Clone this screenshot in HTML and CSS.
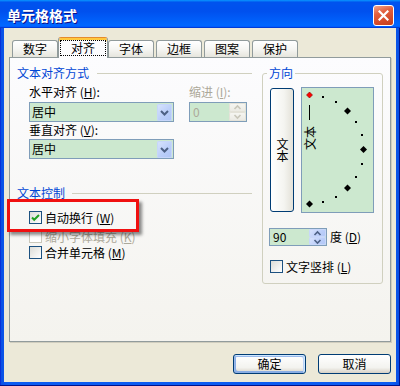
FILE: index.html
```html
<!DOCTYPE html>
<html>
<head>
  <meta charset="UTF-8">
  <title>单元格格式</title>
  <link rel="stylesheet" href="styles.css">
</head>
<body>
  <div class="window">
    <div class="titlebar">
      <span class="title">单元格格式</span>
      <button class="close-btn">
        <svg width="11" height="11" viewBox="0 0 11 11"><path d="M1.5 1.5L9.5 9.5M9.5 1.5L1.5 9.5" stroke="#fff" stroke-width="2.2" stroke-linecap="square"/></svg>
      </button>
    </div>

    <div class="client">
      <div class="tabs">
        <div class="tab">数字</div>
        <div class="tab active"><span class="focus">对齐</span></div>
        <div class="tab">字体</div>
        <div class="tab">边框</div>
        <div class="tab">图案</div>
        <div class="tab">保护</div>
      </div>

      <div class="panel">
        <div class="align-col">
          <div class="group-head">
            <span class="group-label">文本对齐方式</span>
            <span class="group-line"></span>
          </div>

          <div class="field-row">
            <div class="field">
              <div class="field-label">水平对齐 (<u>H</u>):</div>
              <div class="combo">
                <span class="combo-text">居中</span>
                <span class="drop-btn"><svg width="15" height="17" viewBox="0 0 15 17"><path d="M4 7l3.5 3.5L11 7" fill="none" stroke="#4D6185" stroke-width="2"/></svg></span>
              </div>
            </div>
            <div class="field disabled">
              <div class="field-label">缩进 (<u>I</u>):</div>
              <div class="spin indent">
                <span class="spin-text">0</span>
                <span class="spin-btns">
                  <span class="spin-up"><svg width="15" height="7" viewBox="0 0 15 7"><path d="M4.5 5l3-3 3 3" fill="none" stroke="#C9C7BA" stroke-width="1.6"/></svg></span>
                  <span class="spin-down"><svg width="15" height="7" viewBox="0 0 15 7"><path d="M4.5 2l3 3 3-3" fill="none" stroke="#C9C7BA" stroke-width="1.6"/></svg></span>
                </span>
              </div>
            </div>
          </div>

          <div class="field field-v">
            <div class="field-label">垂直对齐 (<u>V</u>):</div>
            <div class="combo">
              <span class="combo-text">居中</span>
              <span class="drop-btn"><svg width="15" height="17" viewBox="0 0 15 17"><path d="M4 7l3.5 3.5L11 7" fill="none" stroke="#4D6185" stroke-width="2"/></svg></span>
            </div>
          </div>

          <div class="group-head control-head">
            <span class="group-label">文本控制</span>
            <span class="group-line"></span>
          </div>

          <div class="checks">
            <div class="check-row">
              <span class="checkbox"><svg width="11" height="11" viewBox="0 0 11 11"><path d="M2 5.5l2.2 2.3L9 3" fill="none" stroke="#21A121" stroke-width="2"/></svg></span>
              <span>自动换行 (<u>W</u>)</span>
            </div>
            <div class="check-row disabled">
              <span class="checkbox"></span>
              <span>缩小字体填充 (<u>K</u>)</span>
            </div>
            <div class="check-row">
              <span class="checkbox"></span>
              <span>合并单元格 (<u>M</u>)</span>
            </div>
            <div class="annot"></div>
          </div>
        </div>

        <fieldset class="orient">
          <legend>方向</legend>
          <div class="orient-top">
            <div class="vtext-btn"><span>文本</span></div>
            <div class="dial">
              <svg width="71" height="124" viewBox="0 0 71 124">
                <path d="M7.5 17V32" stroke="#000" stroke-width="1"/>
                <text transform="translate(13,62) rotate(-90)" font-size="12" font-family="Noto Sans CJK SC, sans-serif">文本</text>
                <g fill="#000">
                  <rect x="20" y="8" width="2" height="2"/>
                  <rect x="33" y="13" width="2" height="2"/>
                  <path d="M45.5 19.5l3.5 3.5-3.5 3.5-3.5-3.5z"/>
                  <rect x="53" y="33" width="2" height="2"/>
                  <rect x="59" y="46" width="2" height="2"/>
                  <path d="M61.5 58l3.5 3.5-3.5 3.5-3.5-3.5z"/>
                  <rect x="59" y="75" width="2" height="2"/>
                  <rect x="53" y="88" width="2" height="2"/>
                  <path d="M45.5 96.5l3.5 3.5-3.5 3.5-3.5-3.5z"/>
                  <rect x="33" y="108" width="2" height="2"/>
                  <rect x="20" y="113" width="2" height="2"/>
                  <path d="M7.5 112.5l3.5 3.5-3.5 3.5-3.5-3.5z"/>
                </g>
                <path d="M7.5 4l3 3-3 3-3-3z" fill="#FF0000" stroke="#800000" stroke-width="0.6"/>
              </svg>
            </div>
          </div>

          <div class="degree-row">
            <div class="spin degree">
              <span class="spin-text">90</span>
              <span class="spin-btns">
                <span class="spin-up"><svg width="15" height="7" viewBox="0 0 15 7"><path d="M4.5 5l3-3 3 3" fill="none" stroke="#4D6185" stroke-width="1.6"/></svg></span>
                <span class="spin-down"><svg width="15" height="7" viewBox="0 0 15 7"><path d="M4.5 2l3 3 3-3" fill="none" stroke="#4D6185" stroke-width="1.6"/></svg></span>
              </span>
            </div>
            <span>度 (<u>D</u>)</span>
          </div>

          <div class="check-row vert-check">
            <span class="checkbox"></span>
            <span>文字竖排 (<u>L</u>)</span>
          </div>
        </fieldset>
      </div>

      <div class="buttons">
        <button class="btn default">确定</button>
        <button class="btn">取消</button>
      </div>
    </div>
  </div>
</body>
</html>
```

FILE: styles.css
```css
* {
  box-sizing: border-box;
}

body {
  margin: 0;
  font-family: "Noto Sans CJK SC", "Noto Sans", sans-serif;
  font-size: 12px;
  line-height: 12px;
  color: #000;
  background: #fff;
}

u {
  text-decoration: underline;
}

.window {
  width: 400px;
  height: 386px;
  display: flex;
  flex-direction: column;
  background: linear-gradient(90deg, #0A4EE2, #0B5CF2 2%, #0B5CF2 98%, #0A4EE2);
  box-shadow: inset 0 -1px #00138C, inset 1px 0 #0831D9, inset -1px 0 #00138C;
}

/* title bar */
.titlebar {
  height: 28px;
  flex: 0 0 28px;
  display: flex;
  align-items: center;
  justify-content: space-between;
  padding: 2px 6px 0 7px;
  background: linear-gradient(180deg, #0997FF, #0053EE 8%, #0050EE 40%, #0066FF 88%, #0066FF 93%, #005BFF 95%, #003DD7 96%, #003DD7);
}

.title {
  color: #fff;
  font-weight: bold;
  font-size: 14px;
  line-height: 14px;
  text-shadow: 1px 1px #0F1089;
}

.close-btn {
  width: 21px;
  height: 21px;
  padding: 0;
  border: 1px solid #fff;
  border-radius: 3px;
  background: linear-gradient(160deg, #F3A58C, #E2603F 35%, #D44B2A 70%, #C23E1D);
  display: flex;
  align-items: center;
  justify-content: center;
}

/* client area */
.client {
  flex: 1;
  margin: 0 4px 4px 4px;
  background: #ECE9D8;
  padding: 9px 5px 0 5px;
  display: flex;
  flex-direction: column;
}

.tabs {
  display: flex;
  align-items: flex-end;
  height: 20px;
  flex: 0 0 20px;
  padding-left: 1px;
}

.tab {
  margin-left: 2px;
  height: 17px;
  padding: 0 10px;
  border: 1px solid #919B9C;
  border-bottom: none;
  border-radius: 3px 3px 0 0;
  background: linear-gradient(#FFFFFF, #F6F6F3 50%, #E6E5DD);
  display: flex;
  align-items: center;
  white-space: nowrap;
}

.tab.active {
  position: relative;
  z-index: 1;
  height: 21px;
  margin: 0 -2px -1px 0;
  padding: 0 1px;
  border-top-color: #E68B2C;
  background: #FCFCFE;
  box-shadow: inset 0 2px #FFC83C;
  justify-content: center;
}

.focus {
  border: 1px dotted #000;
  padding: 1px 10px;
  line-height: 12px;
}

.panel {
  flex: 0 0 285px;
  border: 1px solid #919B9C;
  background: linear-gradient(#FCFCFE, #F4F3EE);
  box-shadow: 1px 1px 0 #D0CDBE;
  padding: 9px 7px 0 7px;
  display: flex;
  justify-content: space-between;
  align-items: flex-start;
}

/* left column */
.align-col {
  width: 235px;
}

.group-head {
  display: flex;
  align-items: center;
  height: 12px;
  gap: 8px;
}

.group-label {
  color: #0046D5;
  white-space: nowrap;
}

.group-line {
  flex: 1;
  border-top: 1px solid #D0D0BF;
}

.control-head {
  margin-top: 28px;
  gap: 7px;
}

.field-row {
  display: flex;
  gap: 15px;
  margin-top: 7px;
  padding-left: 12px;
}

.field-label {
  height: 12px;
  white-space: nowrap;
}

.field.disabled {
  color: #ACA899;
}

.field-v {
  margin-top: 2px;
  padding-left: 12px;
}

.combo {
  margin-top: 4px;
  width: 145px;
  height: 20px;
  border: 1px solid #7F9DB9;
  background: #CCE8CF;
  display: flex;
  align-items: center;
  justify-content: space-between;
  padding: 0 1px 0 2px;
}

.field-v .combo {
  margin-top: 3px;
}

.drop-btn {
  width: 15px;
  height: 17px;
  border-radius: 2px;
  background: linear-gradient(135deg, #D9E4FD, #B9CDF9 60%, #AEC4F6);
  box-shadow: inset 0 0 0 1px #C6D6FA;
  display: flex;
}

.spin {
  border: 1px solid #7F9DB9;
  background: #CCE8CF;
  display: flex;
  align-items: stretch;
  justify-content: space-between;
  padding: 0 0 0 3px;
}

.spin-text {
  align-self: center;
}

.spin.indent {
  margin-top: 4px;
  width: 58px;
  height: 20px;
}

.spin-btns {
  width: 17px;
  display: flex;
  flex-direction: column;
}

.spin-btns > span {
  flex: 1;
  display: flex;
  align-items: center;
  justify-content: center;
  border-radius: 2px;
  background: linear-gradient(135deg, #DCE6FD, #BBCEF9 60%, #B0C6F6);
  box-shadow: inset 0 0 0 1px #C8D7FA;
}

.indent .spin-btns > span {
  background: linear-gradient(#F7F7F3, #EAE9E2);
  box-shadow: inset 0 0 0 1px #E4E2D8;
}

/* checkboxes */
.checks {
  position: relative;
  margin-top: 12px;
  padding-left: 12px;
  display: flex;
  flex-direction: column;
  gap: 4px;
}

.check-row {
  display: flex;
  align-items: center;
  height: 13px;
  gap: 3px;
  white-space: nowrap;
}

.check-row.disabled {
  color: #ACA899;
  margin: 2px 0 -1px 0;
}

.checkbox {
  width: 13px;
  height: 13px;
  flex: 0 0 13px;
  border: 1px solid #1C5180;
  background: linear-gradient(135deg, #DCDCD7, #FFFFFF);
  display: flex;
}

.check-row.disabled .checkbox {
  border-color: #CAC8BB;
  background: #fff;
}

.annot {
  position: absolute;
  left: -10px;
  top: -12px;
  width: 132px;
  height: 33px;
  border: 3px solid #F01010;
  box-shadow: 3px 3px 3px rgba(0, 0, 0, 0.45);
}

/* orientation group */
.orient {
  width: 121px;
  height: 217px;
  margin: 0;
  min-width: 0;
  padding: 9px 7px 0 7px;
  border: 1px solid #D0D0BF;
  border-radius: 3px;
}

.orient legend {
  color: #0046D5;
  padding: 0 2px;
  margin-left: -3px;
  line-height: 12px;
}

.orient-top {
  display: flex;
  align-items: flex-start;
  gap: 7px;
}

.vtext-btn {
  width: 24px;
  height: 124px;
  border: 1px solid #003C74;
  border-radius: 3px;
  background: linear-gradient(90deg, #FFFFFF, #F4F4F0 60%, #E3E1D8);
  display: flex;
  align-items: center;
  justify-content: center;
}

.vtext-btn span {
  writing-mode: vertical-rl;
  line-height: 12px;
}

.dial {
  width: 73px;
  height: 126px;
  margin-top: -1px;
  border: 1px solid #7F9DB9;
  background: #CCE8CF;
}

.dial svg {
  display: block;
}

.degree-row {
  display: flex;
  align-items: center;
  gap: 3px;
  margin-top: 15px;
  margin-left: -1px;
}

.spin.degree {
  width: 58px;
  height: 18px;
}

.vert-check {
  margin-top: 14px;
}

/* bottom buttons */
.buttons {
  display: flex;
  justify-content: flex-end;
  gap: 12px;
  margin-top: 12px;
}

.btn {
  width: 73px;
  height: 20px;
  padding: 0;
  border: 1px solid #003C74;
  border-radius: 3px;
  background: linear-gradient(#FFFFFF, #F3F3EF 70%, #D6D0C5);
  font-family: "Noto Sans CJK SC", "Noto Sans", sans-serif;
  font-size: 12px;
  line-height: 12px;
  color: #000;
}

.btn.default {
  box-shadow: inset -1px 1px #CEE7FF, inset 1px 2px #98B8EA, inset -2px 2px #BCD4F6, inset 1px -1px #89ADE4, inset 2px -2px #89ADE4;
}
```
